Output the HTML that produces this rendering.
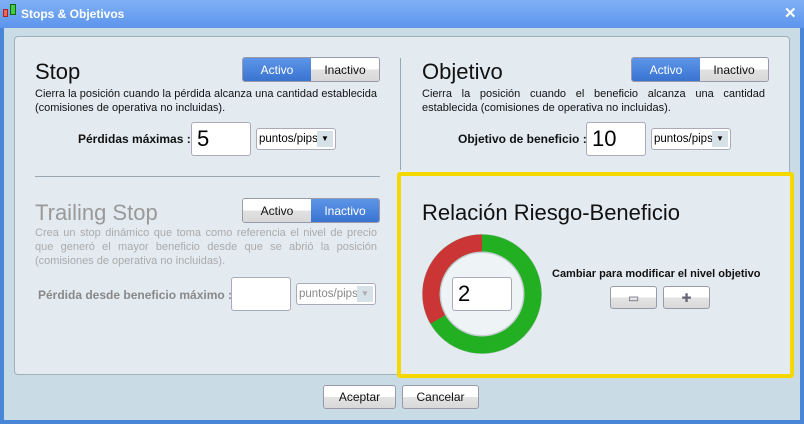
<!DOCTYPE html><html><head><meta charset="utf-8"><style>
*{margin:0;padding:0;box-sizing:border-box}
body{width:804px;height:424px;overflow:hidden;font-family:"Liberation Sans",sans-serif;background:#4a86d8;position:relative}
.a{position:absolute}
.tb{left:0;top:0;width:804px;height:28px;background:linear-gradient(#7fb0f6,#5d95ec);color:#fff;font-weight:bold;font-size:12px}
.body{left:4px;top:28px;width:796px;height:392px;background:#c9dbe5}
.panel{left:14px;top:36px;width:776px;height:339px;background:#e3ebf1;border:1px solid #9fb0bb;border-radius:4px}
.h{font-size:22px;color:#111}
.p{font-size:11px;color:#111;line-height:14px;text-align:justify}
.tg{height:25px;border:1px solid #99a;border-radius:3px;display:flex;overflow:hidden;font-size:12px}
.tg div{flex:1;display:flex;align-items:center;justify-content:center}
.on{background:linear-gradient(#5d95e8,#3a74d0);color:#fff}
.off{background:linear-gradient(#fff 50%,#e2e2e2 50%,#d8d8d8);color:#111}
.lbl{font-size:12px;font-weight:bold;color:#111}
.in{background:#fff;border:1px solid #aab;border-radius:3px;font-size:22px;padding-left:5px;line-height:32px}
.dd{background:#fff;border:1px solid #aab;border-radius:3px;font-size:11.5px;line-height:20px;padding-left:2px;white-space:nowrap;overflow:hidden}
.dd i{position:absolute;right:2px;top:2px;width:16px;height:16px;background:#d6e1e8;font-style:normal;font-size:8px;text-align:center;line-height:16px}
.btn{background:linear-gradient(#fff 50%,#e4e4e4 50%,#d9d9d9);border:1px solid #99a;border-radius:3px;font-size:12px;text-align:center;line-height:22px;color:#111}
</style></head><body>
<div class="a tb"><div class="a" style="left:3px;top:9px;width:5px;height:8px;background:#e65;border:1px solid #a22"></div><div class="a" style="left:10px;top:4px;width:6px;height:11px;background:#4c4;border:1px solid #161"></div><div class="a" style="left:21px;top:7px">Stops &amp; Objetivos</div><div class="a" style="left:784px;top:4px;font-size:15px">✕</div></div>
<div class="a body"></div>
<div class="a panel"></div>
<!-- Stop -->
<div class="a h" style="left:35px;top:59px">Stop</div>
<div class="a tg" style="left:242px;top:57px;width:138px"><div class="on">Activo</div><div class="off">Inactivo</div></div>
<div class="a p" style="left:35px;top:87px;width:342px">Cierra la posición cuando la pérdida alcanza una cantidad establecida (comisiones de operativa no incluidas).</div>
<div class="a lbl" style="left:78px;top:132px">Pérdidas máximas :</div>
<div class="a in" style="left:191px;top:122px;width:60px;height:34px">5</div>
<div class="a dd" style="left:256px;top:128px;width:80px;height:22px">puntos/pips<i>▼</i></div>
<div class="a" style="left:35px;top:176px;width:345px;height:1px;background:#9aa8b2"></div>
<!-- Trailing -->
<div class="a h" style="left:35px;top:200px;color:#999">Trailing Stop</div>
<div class="a tg" style="left:242px;top:198px;width:138px"><div class="off">Activo</div><div class="on">Inactivo</div></div>
<div class="a p" style="left:35px;top:226px;width:342px;color:#aaa">Crea un stop dinámico que toma como referencia el nivel de precio que generó el mayor beneficio desde que se abrió la posición (comisiones de operativa no incluidas).</div>
<div class="a lbl" style="left:38px;top:288px;color:#888">Pérdida desde beneficio máximo :</div>
<div class="a in" style="left:231px;top:277px;width:60px;height:34px"></div>
<div class="a dd" style="left:296px;top:283px;width:80px;height:22px;color:#888">puntos/pips<i style="color:#aaa">▼</i></div>
<div class="a" style="left:400px;top:58px;width:1px;height:112px;background:#9aa8b2"></div>
<!-- Objetivo -->
<div class="a h" style="left:422px;top:59px">Objetivo</div>
<div class="a tg" style="left:631px;top:57px;width:138px"><div class="on">Activo</div><div class="off">Inactivo</div></div>
<div class="a p" style="left:422px;top:87px;width:343px">Cierra la posición cuando el beneficio alcanza una cantidad establecida (comisiones de operativa no incluidas).</div>
<div class="a lbl" style="left:458px;top:132px">Objetivo de beneficio :</div>
<div class="a in" style="left:586px;top:122px;width:60px;height:34px">10</div>
<div class="a dd" style="left:651px;top:128px;width:80px;height:22px">puntos/pips<i>▼</i></div>
<!-- Riesgo -->
<div class="a" style="left:397px;top:172px;width:397px;height:206px;border:4px solid #f5d800;border-radius:3px;background:#e3ebf1"></div>
<div class="a h" style="left:422px;top:200px">Relación Riesgo-Beneficio</div>
<svg class="a" style="left:420px;top:232px" width="124" height="124" viewBox="0 0 124 124">
<circle cx="62" cy="62" r="60" fill="#c5ccd2"/>
<circle cx="62" cy="62" r="51" fill="none" stroke="#22b022" stroke-width="17"/>
<path d="M62 11 A51 51 0 0 0 17.8 87.5" fill="none" stroke="#cc3535" stroke-width="17"/>
<circle cx="62" cy="62" r="42" fill="#c5ccd2"/>
<circle cx="62" cy="62" r="41" fill="#eef3f6"/>
</svg>
<div class="a in" style="left:452px;top:277px;width:60px;height:34px">2</div>
<div class="a lbl" style="left:552px;top:268px;font-size:11px">Cambiar para modificar el nivel objetivo</div>
<div class="a btn" style="left:610px;top:286px;width:47px;height:23px;color:#667">▭</div>
<div class="a btn" style="left:663px;top:286px;width:47px;height:23px;color:#667">✚</div>
<div class="a btn" style="left:323px;top:385px;width:73px;height:24px">Aceptar</div>
<div class="a btn" style="left:402px;top:385px;width:77px;height:24px">Cancelar</div>
</body></html>
